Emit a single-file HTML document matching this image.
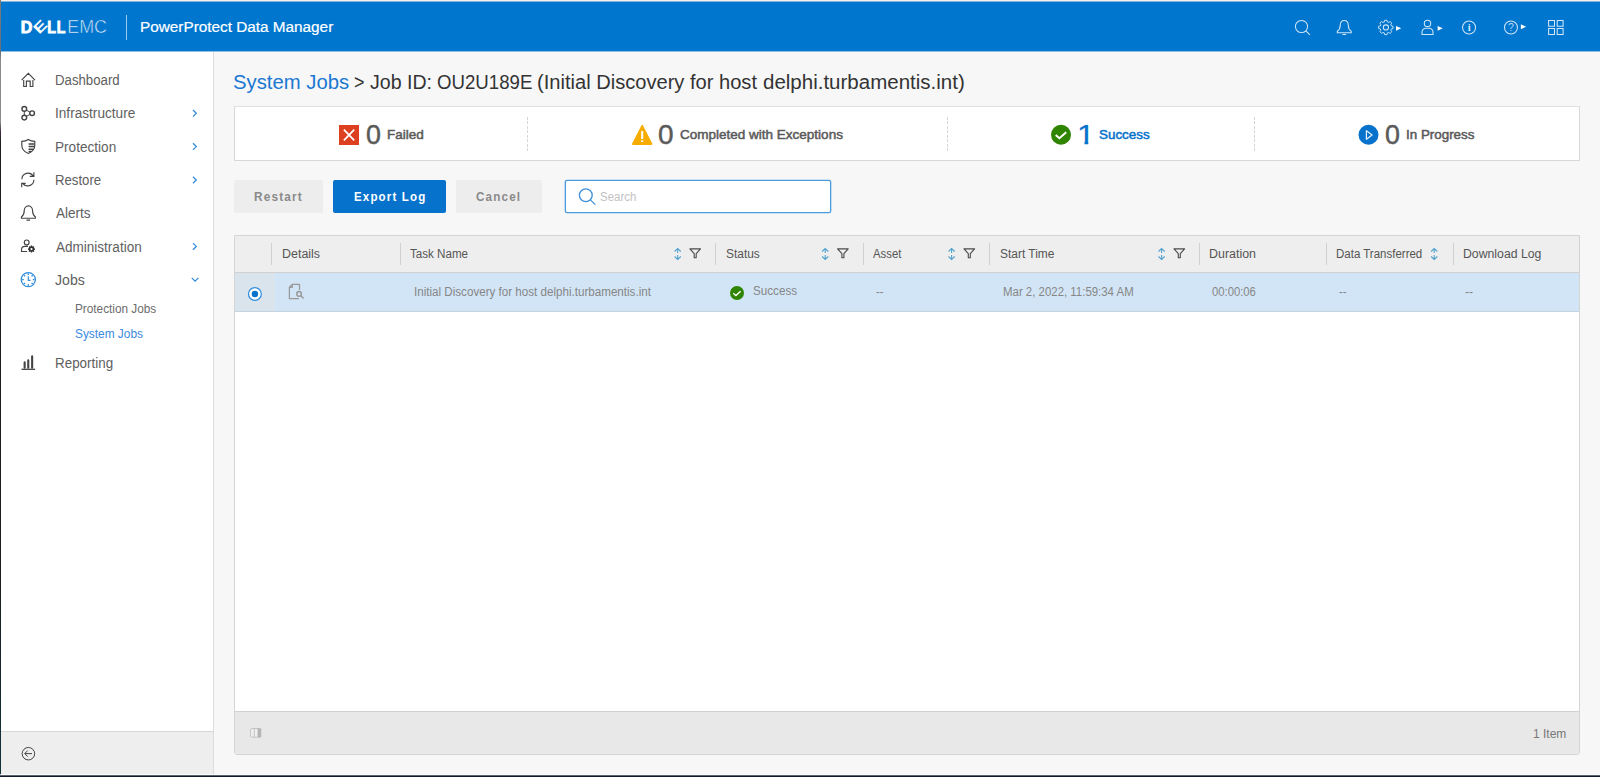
<!DOCTYPE html>
<html lang="en">
<head>
<meta charset="utf-8">
<title>PowerProtect Data Manager</title>
<style>
*{box-sizing:border-box;margin:0;padding:0}
html,body{width:1600px;height:777px;overflow:hidden}
body{position:relative;background:#f7f7f7;font-family:"Liberation Sans",Arial,sans-serif;color:#444;font-size:14px}
.abs{position:absolute}
.t{position:absolute;white-space:nowrap;line-height:1;transform-origin:0 0}
#edge-l{left:0;top:0;width:1px;height:777px;background:linear-gradient(#7b7b7b 0,#65707a 52px,#8a8a8a 60px,#8a8a8a 122px,#3a2a3a 132px,#1c1c1c 145px,#1c1c1c 560px,#12303a 760px)}
#edge-t{left:1px;top:0;width:1599px;height:2px;background:linear-gradient(#f3f0ee 0,#f3f0ee 1px,#86b6e0 1px,#86b6e0 2px)}
#edge-b{left:0;top:774px;width:1600px;height:3px;background:linear-gradient(rgba(255,255,255,.75) 0,rgba(255,255,255,.75) 1px,#5b6470 1px,#5b6470 2px,#0f1b29 2px,#0f1b29 3px)}
/* header */
#hdr{left:1px;top:2px;width:1599px;height:50px;background:linear-gradient(#0076ce 0,#0076ce 49px,rgba(0,118,206,.42) 49px,rgba(0,118,206,.42) 50px)}
#hdr .sep{left:125px;top:13px;width:1px;height:25px;background:#9fcbee}
#apptitle{font-size:15.5px;color:#fff;-webkit-text-stroke:.2px #fff}
/* sidebar */
#side{left:1px;top:52px;width:213px;height:723px;background:#fff;border-right:1px solid #dcdcdc}
#side .it{font-size:14px;color:#606060}
#side .sub{font-size:12px;color:#6c6c6c}
#side .sub.on{color:#3a8ade}
#sidefoot{left:0;top:679px;width:212px;height:44px;background:#eeeeee;border-top:1px solid #d6d6d6}
/* main */
#title{left:234px;top:72px;font-size:20px;color:#333}
#title a{color:#1b78d2;text-decoration:none}
#stats{left:234px;top:106px;width:1346px;height:55px;background:#fff;border:1px solid #d8d8d8;border-top-color:#e0e0e0}
.vsep{top:10px;width:1px;height:34px;background:repeating-linear-gradient(#d6d6d6 0,#d6d6d6 3px,transparent 3px,transparent 4.44px)}
.num{font-size:27px;color:#5a5a5a;-webkit-text-stroke:.45px #5a5a5a}
.blue{color:#0672cb !important}
.lbl{font-size:13px;color:#5a5a5a;-webkit-text-stroke:.5px #5a5a5a}
#n3{-webkit-text-stroke:.25px #0672cb;clip-path:polygon(0 0,100% 0,100% 18.9px,9.6px 18.9px,9.6px 27px,6.4px 27px,6.4px 18.9px,0 18.9px)}
.lbl.blue{-webkit-text-stroke-color:#0672cb}
.btn{height:33px;top:180px;border-radius:2px;font-size:12px;font-weight:bold;letter-spacing:1.2px;text-align:center;line-height:33px;background:#ededed;color:#8a8a8a}
.btn.pri{background:#0672cb;color:#fff}
#search{left:565px;top:180px;width:266px;height:33px;background:#fff;border:1px solid #4a9ade;border-radius:2px;box-shadow:0 0 0 .3px #4a9ade}
#search span{font-size:12px;color:#c2c2c2}
/* grid */
#grid{left:234px;top:235px;width:1346px;height:520px;background:#fff;border:1px solid #d4d4d4;border-radius:0 0 3px 3px}
#ghead{left:0;top:0;width:1344px;height:37px;background:#eeeeee;border-bottom:1px solid #d0d0d0}
#ghead .h{font-size:12px;color:#555}
#ghead .cs{top:7px;width:1px;height:22px;background:#d0d0d0}
#grow{left:0;top:37px;width:1344px;height:39px;background:#d2e5f6;border-bottom:1px solid #c4d3e0}
#grow .c{font-size:12px;color:#868686}
#grow .sel{left:0;top:0;width:40px;height:38px;background:#d9e4ec}
#gfoot{left:0;top:475px;width:1344px;height:43px;border-radius:0 0 2px 2px;background:#e8e8e8;border-top:1px solid #d0d0d0}
#gfoot .cnt{font-size:12px;color:#777}
/*FIT*/
#apptitle{left:139px;top:17px;transform:scaleX(0.9881)}
#s0{left:54px;top:21px;transform:scaleX(0.9437)}
#s1{left:54px;top:54px;transform:scaleX(0.9731)}
#s2{left:54px;top:88px;transform:scaleX(0.9712)}
#s3{left:54px;top:121px;transform:scaleX(0.9421)}
#s4{left:55px;top:154px;transform:scaleX(0.9668)}
#s5{left:55px;top:188px;transform:scaleX(0.9661)}
#s6{left:54px;top:221px;transform:scaleX(1.0092)}
#s7{left:74px;top:251px;transform:scaleX(0.9814)}
#s8{left:74px;top:276px;transform:scaleX(0.9891)}
#s9{left:54px;top:304px;transform:scaleX(0.9572)}
#n1{left:131px;top:15px;transform:scaleX(0.9933)}
#l1{left:152px;top:21px;transform:scaleX(1.0391)}
#n2{left:423px;top:15px;transform:scaleX(1.0337)}
#l2{left:445px;top:21px;transform:scaleX(1.0389)}
#n3{left:842px;top:15px;transform:scaleX(1.177)}
#l3{left:864px;top:21px;transform:scaleX(1.0318)}
#n4{left:1150px;top:15px;transform:scaleX(0.9933)}
#l4{left:1171px;top:21px;transform:scaleX(1.0293)}
#b1{left:20px;top:11px;transform:scaleX(0.9835)}
#b2{left:21px;top:11px;transform:scaleX(0.9614)}
#b3{left:20px;top:11px;transform:scaleX(0.9727)}
#sp{left:34px;top:10px;transform:scaleX(0.9548)}
#h1{left:47px;top:12px;transform:scaleX(1.0389)}
#h2{left:175px;top:12px;transform:scaleX(0.9676)}
#h3{left:491px;top:12px;transform:scaleX(0.9933)}
#h4{left:638px;top:12px;transform:scaleX(0.9462)}
#h5{left:765px;top:12px;transform:scaleX(0.9941)}
#h6{left:974px;top:12px;transform:scaleX(1.0362)}
#h7{left:1101px;top:12px;transform:scaleX(0.9578)}
#h8{left:1228px;top:12px;transform:scaleX(1.0217)}
#c2{left:179px;top:13px;transform:scaleX(0.9679)}
#c3{left:518px;top:12px;transform:scaleX(0.9719)}
#c4{left:641px;top:13.0px;transform:scaleX(0.9406)}
#c5{left:768px;top:13px;transform:scaleX(0.9524)}
#c6{left:977px;top:13px;transform:scaleX(0.9394)}
#c7{left:1104px;top:13.0px;transform:scaleX(0.9148)}
#c8{left:1230px;top:13.0px;transform:scaleX(1.0242)}
#cnt{left:1298px;top:16px;transform:scaleX(0.9977)}
#t1{left:-1px;top:0px;transform:scaleX(1.0156)}
#t2{left:120px;top:0px;transform:scaleX(0.8947)}
#t3{left:136px;top:0px;transform:scaleX(0.9781)}
#t4{left:203px;top:0px;transform:scaleX(0.9319)}
#t5{left:303px;top:0px;transform:scaleX(1.0048)}
#t6{left:529px;top:0px;transform:scaleX(1.0252)}
/*ENDFIT*/
</style>
</head>
<body>
<div id="hdr" class="abs">
  <div class="sep abs"></div>
  <svg class="abs" id="logo" style="left:9px;top:8px" width="110" height="34" viewBox="10 10 110 34">
    <g font-family="Liberation Sans, Arial, sans-serif" font-weight="bold" font-size="16.7" fill="#fff" stroke="#fff" stroke-width="0.9" stroke-linejoin="miter">
      <text x="20.7" y="32.5" textLength="11.6" lengthAdjust="spacingAndGlyphs">D</text>
      <text transform="translate(40.3 33.9) rotate(-45) scale(1.3 1)" x="-1" y="-0.1" font-size="14.6" stroke="none">E</text>
      <text x="47.3" y="32.5" textLength="8.7" lengthAdjust="spacingAndGlyphs">L</text>
      <text x="56.8" y="32.5" textLength="8.7" lengthAdjust="spacingAndGlyphs">L</text>
    </g>
    <text x="67.2" y="33" font-family="Liberation Sans, Arial, sans-serif" font-size="18.4" fill="#fff" fill-opacity=".95" stroke="#0076ce" stroke-width="0.6" textLength="39.8" lengthAdjust="spacingAndGlyphs">EMC</text>
  </svg>
  <svg class="abs" id="hicons" style="left:1279px;top:8px" width="300" height="34" viewBox="1280 10 300 34" fill="none" stroke="#fff" stroke-opacity=".82" stroke-width="1.05">
    <circle cx="1301.5" cy="26.5" r="6.05"/><path d="M1305.9 30.9l4 4"/>
    <path d="M1337.3 32.7v-1.4c1.9-1.2 2.9-2.6 2.9-5.7c0-3 1.7-5.1 4.05-5.1s4.05 2.1 4.05 5.1c0 3.1 1 4.5 2.9 5.7v1.4zM1342.4 34.4h3.7"/>
    <g id="gear"><circle cx="1385.9" cy="27.45" r="2.6"/>
      <path transform="translate(1385.85 27.45) scale(.89) translate(-1385.9 -28.5)" d="M1384.6 20.4h2.6l.4 1.9 1.5.6 1.6-1.1 1.9 1.9-1.1 1.6.6 1.5 1.9.4v2.6l-1.9.4-.6 1.5 1.1 1.6-1.9 1.9-1.6-1.1-1.5.6-.4 1.9h-2.6l-.4-1.9-1.5-.6-1.6 1.1-1.9-1.9 1.1-1.6-.6-1.5-1.9-.4v-2.6l1.9-.4.6-1.5-1.1-1.6 1.9-1.9 1.6 1.1 1.5-.6z" stroke-linejoin="round"/></g>
    <path d="M1396 25.9v4.9l5.2-2.45z" fill="#fff" stroke="none"/>
    <circle cx="1427.5" cy="23.4" r="3.2"/><path d="M1422 34.4v-2.3a3.9 3.9 0 0 1 3.9-3.9h3.2a3.9 3.9 0 0 1 3.9 3.9v2.3z"/>
    <path d="M1437.6 25.9v4.9l5.2-2.45z" fill="#fff" stroke="none"/>
    <circle cx="1469.05" cy="27.5" r="6.5"/>
    <text x="1469.1" y="31.2" font-family="Liberation Serif, serif" font-size="10.5" font-weight="bold" text-anchor="middle" fill="#fff" fill-opacity=".85" stroke="none">i</text>
    <circle cx="1510.95" cy="27.5" r="6.5"/>
    <text x="1511" y="31.3" font-family="Liberation Sans, Arial, sans-serif" font-size="10.5" text-anchor="middle" fill="#fff" fill-opacity=".7" stroke="none">?</text>
    <path d="M1520.9 24.3v4.9l5.2-2.45z" fill="#fff" stroke="none"/>
    <path d="M1548.6 20.4h5.9v5.9h-5.9zM1557.2 20.4h5.9v5.9h-5.9zM1548.6 28.5h5.9v5.9h-5.9zM1557.2 28.5h5.9v5.9h-5.9z"/>
  </svg>
  <div id="apptitle" class="t">PowerProtect Data Manager</div>
</div>

<div id="side" class="abs">
  <div class="t it" id="s0">Dashboard</div>
  <div class="t it" id="s1">Infrastructure</div>
  <div class="t it" id="s2">Protection</div>
  <div class="t it" id="s3">Restore</div>
  <div class="t it" id="s4">Alerts</div>
  <div class="t it" id="s5">Administration</div>
  <div class="t it" id="s6">Jobs</div>
  <div class="t sub" id="s7">Protection Jobs</div>
  <div class="t sub on" id="s8">System Jobs</div>
  <div class="t it" id="s9">Reporting</div>
  <div id="sidefoot" class="abs"></div>
  <svg class="abs" id="sicons" style="left:0;top:0" width="212" height="723" viewBox="1 52 212 723" fill="none" stroke="#444" stroke-width="1.15">
    <path d="M23.7 80v6.5h2.7v-5.4h3.8v5.4h2.7v-6.5M21.6 80.1l6.7-6.7 6.7 6.7"/>
    <g stroke-width="1.4"><circle cx="24.3" cy="108.9" r="2.35"/><circle cx="32.1" cy="113.2" r="2.35"/><circle cx="24.3" cy="117.6" r="2.35"/><path d="M24.3 111.1v4.3M26.2 110l3.9 2.2M26.2 116.5l3.9-2.2" stroke-width="1"/></g>
    <path d="M28.3 139.5c-2 1.3-4.200 1.800-6.500 1.900v3.600c0 4.200 2.700 7 6.500 8.500c3.800-1.500 6.500-4.300 6.500-8.500v-3.600c-2.300-.1-4.500-.6-6.500-1.900z"/>
    <path d="M28.600 143.900h5.800M28.600 146.600h5.800M28.600 149.300h4.800M28.600 151.600h2.600" stroke-width="1.5"/>
    <path d="M21.900 179.200a6.100 6.100 0 0 1 11.300-3.100M33.900 172.200v4.200h-4.200M33.900 179.800a6.100 6.100 0 0 1-11.300 3.100M21.700 187.200v-3.800h4" />
    <path d="M21.400 218.200v-1.300c1.900-1.200 2.800-2.700 2.800-5.800c0-3 1.800-5.200 4.200-5.200s4.200 2.200 4.200 5.200c0 3.100.9 4.600 2.800 5.800v1.300zM26.500 220.100h3.600"/>
    <circle cx="26.700" cy="242.400" r="2.400"/><path d="M28 246.400h-3.200a3.300 3.300 0 0 0-3.300 3.300v1.800h5.600"/>
    <g fill="#333" stroke="none"><path transform="translate(31.5 249.1) scale(.74) translate(-31.4 -250)" d="M30.600 245.300h1.600l.25 1 .8.350.9-.55 1.150 1.150-.55.900.350.800 1 .25v1.600l-1 .25-.350.800.55.900-1.150 1.150-.9-.55-.8.350-.25 1h-1.600l-.25-1-.8-.350-.9.550-1.150-1.150.55-.9-.350-.8-1-.25v-1.600l1-.25.350-.8-.55-.9 1.150-1.150.9.550.8-.350z"/><circle cx="31.500" cy="249.100" r="1.100" fill="#fff"/></g>
    <g stroke="#2f8bdc"><circle cx="28.300" cy="279.600" r="7.100" stroke-width="1.250"/><path d="M28.300 276.300v4.100h2.200" stroke-width="1.100"/>
      <path d="M28.3 273.4v1.7M28.3 284.1v1.7M22.100 279.600h1.700M32.800 279.600h1.700M23.900 275.200l1.150 1.150M31.550 282.850l1.150 1.150M23.900 284l1.150-1.150M31.550 276.350l1.150-1.150" stroke-width="1.250"/></g>
    <path d="M24.650 362.200v5.600M28.250 360.200v7.600M32.150 356.400v11.400" stroke-width="2.100" stroke="#444" stroke-linecap="round"/><path d="M21.500 369.300h13.600" stroke-width="1.300"/>
    <g stroke="#2f8bdc" stroke-width="1.250"><path d="M193 110l3.300 3.300-3.300 3.300M193 143.300l3.300 3.300-3.300 3.300M193 176.700l3.300 3.300-3.300 3.300M193 243.100l3.300 3.300-3.300 3.300M191.800 277.900l3.300 3.300 3.300-3.300"/></g>
    <g stroke-width="1"><circle cx="28.400" cy="753.700" r="6.250"/><path d="M32 753.600h-7M27.700 750.600l-3 3 3 3"/></g>
  </svg>
</div>

<div id="title" class="abs"><a class="t" id="t1">System Jobs</a> <span class="t" id="t2">&gt;</span> <span class="t" id="t3">Job ID:</span> <span class="t" id="t4">OU2U189E</span> <span class="t" id="t5">(Initial Discovery for host</span> <span class="t" id="t6">delphi.turbamentis.int)</span></div>

<div id="stats" class="abs">
  <div class="vsep abs" style="left:292px"></div>
  <div class="vsep abs" style="left:712px"></div>
  <div class="vsep abs" style="left:1019px"></div>
  <svg class="abs" id="sticons" style="left:-1px;top:-1px" width="1346" height="55" viewBox="234 106 1346 55">
    <rect x="339" y="125" width="20" height="20" fill="#dc4020"/><path d="M343.900 129.600l10.300 10.800M354.200 129.600l-10.300 10.800" stroke="#fff" stroke-width="1.700" fill="none"/>
    <path d="M642.200 125.800l9.300 18.200h-18.600z" fill="#f7ad00" stroke="#f7ad00" stroke-width="1.800" stroke-linejoin="round"/><path d="M641.200 130.900h2v8.100h-2zM641.200 140.300h2v1.800h-2z" fill="#fff"/>
    <circle cx="1061" cy="134.750" r="10" fill="#2f8400"/><path d="M1055.700 135.100l3.700 3.100 6.800-6" stroke="#fff" stroke-width="2" fill="none"/>
    <circle cx="1368.500" cy="134.750" r="10" fill="#0672cb"/><path d="M1366.400 130.700v8.600l5.700-4.300z" stroke="#fff" stroke-width="1.200" fill="none" stroke-linejoin="round" stroke-opacity=".9"/>
  </svg>
  <div class="t num" id="n1">0</div>
  <div class="t lbl" id="l1">Failed</div>
  <div class="t num" id="n2">0</div>
  <div class="t lbl" id="l2">Completed with Exceptions</div>
  <div class="t num blue" id="n3">1</div>
  <div class="t lbl blue" id="l3">Success</div>
  <div class="t num" id="n4">0</div>
  <div class="t lbl" id="l4">In Progress</div>
</div>

<div class="btn abs" style="left:234px;width:89px"><span class="t" id="b1">Restart</span></div>
<div class="btn pri abs" style="left:333px;width:113px"><span class="t" id="b2">Export Log</span></div>
<div class="btn abs" style="left:456px;width:86px"><span class="t" id="b3">Cancel</span></div>
<div id="search" class="abs"><svg class="abs" style="left:9px;top:5px" width="26" height="24" viewBox="575 186 26 24" fill="none" stroke="#3d8fd9" stroke-width="1.3"><circle cx="585.800" cy="195.300" r="6.400"/><path d="M590.400 199.900l4.900 4.700"/></svg><span class="t" id="sp">Search</span></div>

<div id="grid" class="abs">
  <div id="ghead" class="abs">
    <div class="cs abs" style="left:36px"></div>
    <div class="t h" id="h1">Details</div>
    <div class="cs abs" style="left:165px"></div>
    <div class="t h" id="h2">Task Name</div>
    <div class="cs abs" style="left:480px"></div>
    <div class="t h" id="h3">Status</div>
    <div class="cs abs" style="left:628px"></div>
    <div class="t h" id="h4">Asset</div>
    <div class="cs abs" style="left:754px"></div>
    <div class="t h" id="h5">Start Time</div>
    <div class="cs abs" style="left:964px"></div>
    <div class="t h" id="h6">Duration</div>
    <div class="cs abs" style="left:1091px"></div>
    <div class="t h" id="h7">Data Transferred</div>
    <div class="cs abs" style="left:1218px"></div>
    <div class="t h" id="h8">Download Log</div>
  </div>
  <div id="grow" class="abs"><div class="sel abs"></div>
    <div class="t c" id="c2">Initial Discovery for host delphi.turbamentis.int</div>
    <div class="t c" id="c3">Success</div>
    <div class="t c" id="c4">--</div>
    <div class="t c" id="c5">Mar 2, 2022, 11:59:34 AM</div>
    <div class="t c" id="c6">00:00:06</div>
    <div class="t c" id="c7">--</div>
    <div class="t c" id="c8">--</div>
  </div>
    <div id="gfoot" class="abs"><div class="t cnt" id="cnt">1 Item</div></div>
  <svg class="abs" id="gicons" style="left:0;top:0" width="1344" height="518" viewBox="235 236 1344 518" fill="none">
    <g stroke="#3f99cc" stroke-width="1.050" stroke-opacity=".9"><path d="M677.7 248.700v4.200M674.6 251.500l3.100-3 3.100 3M677.7 255v4.300M674.6 256.500l3.100 3 3.100-3"/><path d="M825.2 248.700v4.200M822.1 251.500l3.100-3 3.100 3M825.2 255v4.300M822.1 256.500l3.100 3 3.100-3"/><path d="M951.6 248.700v4.200M948.5 251.500l3.100-3 3.100 3M951.6 255v4.300M948.5 256.500l3.100 3 3.100-3"/><path d="M1161.6 248.700v4.200M1158.5 251.500l3.100-3 3.100 3M1161.6 255v4.300M1158.5 256.500l3.100 3 3.100-3"/><path d="M1434.2 248.700v4.200M1431.1 251.500l3.100-3 3.100 3M1434.2 255v4.300M1431.1 256.500l3.100 3 3.100-3"/></g>
    <g stroke="#4a4a4a" stroke-width="1.100" stroke-linejoin="round"><path d="M689.9 248.900h10.600l-4.300 4.800v4.100h-2v-4.100z"/><path d="M837.6 248.900h10.600l-4.300 4.800v4.100h-2v-4.100z"/><path d="M964.0 248.900h10.600l-4.300 4.800v4.100h-2v-4.100z"/><path d="M1174.0 248.900h10.600l-4.300 4.800v4.100h-2v-4.100z"/></g>
    <circle cx="254.900" cy="294" r="6.400" fill="#fff" stroke="#2f8bdc" stroke-width="1.200"/><circle cx="254.900" cy="294" r="3.200" fill="#0672cb"/>
    <g stroke="#999" stroke-width="1.250"><path d="M299.500 290v-5.600h-7.200l-2.900 2.900v11.200h9.600M292.300 284.400v2.900h-2.900" stroke-linejoin="round"/><circle cx="299.050" cy="293.900" r="2.300" stroke-width="1.500"/><path d="M300.800 295.700l2.800 2.800" stroke-width="1.500"/></g>
    <circle cx="737" cy="293" r="7" fill="#2f8400"/><path d="M733.300 293.300l2.600 2.200 4.700-4.200" stroke="#fff" stroke-width="1.400"/>
    <rect x="250.600" y="728.500" width="10.300" height="8.700" rx="1" fill="#efefef" stroke="#c4c4c4" stroke-width="1"/><path d="M254.300 728.500v8.700" stroke="#c4c4c4"/><rect x="257.600" y="728.500" width="3.300" height="8.700" fill="#b4b4b4"/>
  </svg>
</div>

<div id="edge-t" class="abs"></div>
<div id="edge-l" class="abs"></div>
<div id="edge-b" class="abs"></div>
</body>
</html>
